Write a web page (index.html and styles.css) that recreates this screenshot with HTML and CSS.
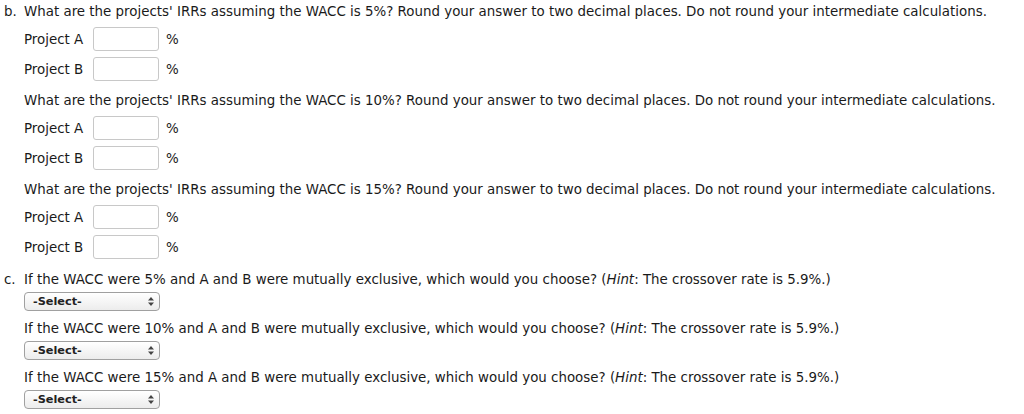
FILE: index.html
```html
<!DOCTYPE html>
<html>
<head>
<meta charset="utf-8">
<link rel="stylesheet" href="styles.css">
</head>
<body>
<div class="page">
  <div class="part">
    <div class="part-label">b.</div>
    <div class="part-body">
      <p class="q">What are the projects' IRRs assuming the WACC is 5%? Round your answer to two decimal places. Do not round your intermediate calculations.</p>
      <div class="row"><span class="lbl">Project A</span><span class="inp"></span><span class="pct">%</span></div>
      <div class="row"><span class="lbl">Project B</span><span class="inp"></span><span class="pct">%</span></div>
      <p class="q gap">What are the projects' IRRs assuming the WACC is 10%? Round your answer to two decimal places. Do not round your intermediate calculations.</p>
      <div class="row"><span class="lbl">Project A</span><span class="inp"></span><span class="pct">%</span></div>
      <div class="row"><span class="lbl">Project B</span><span class="inp"></span><span class="pct">%</span></div>
      <p class="q gap">What are the projects' IRRs assuming the WACC is 15%? Round your answer to two decimal places. Do not round your intermediate calculations.</p>
      <div class="row"><span class="lbl">Project A</span><span class="inp"></span><span class="pct">%</span></div>
      <div class="row"><span class="lbl">Project B</span><span class="inp"></span><span class="pct">%</span></div>
    </div>
  </div>
  <div class="part part-c">
    <div class="part-label">c.</div>
    <div class="part-body">
      <p class="q">If the WACC were 5% and A and B were mutually exclusive, which would you choose? (<i>Hint</i>: The crossover rate is 5.9%.)</p>
      <div class="sel"><span>-Select-</span><svg class="arr" width="6" height="9" viewBox="0 0 6 9"><path d="M0 3.5 L3 0 L6 3.5 Z M0 5.5 L3 9 L6 5.5 Z" fill="#444"/></svg></div>
      <p class="q gap2">If the WACC were 10% and A and B were mutually exclusive, which would you choose? (<i>Hint</i>: The crossover rate is 5.9%.)</p>
      <div class="sel"><span>-Select-</span><svg class="arr" width="6" height="9" viewBox="0 0 6 9"><path d="M0 3.5 L3 0 L6 3.5 Z M0 5.5 L3 9 L6 5.5 Z" fill="#444"/></svg></div>
      <p class="q gap2">If the WACC were 15% and A and B were mutually exclusive, which would you choose? (<i>Hint</i>: The crossover rate is 5.9%.)</p>
      <div class="sel"><span>-Select-</span><svg class="arr" width="6" height="9" viewBox="0 0 6 9"><path d="M0 3.5 L3 0 L6 3.5 Z M0 5.5 L3 9 L6 5.5 Z" fill="#444"/></svg></div>
    </div>
  </div>
</div>
</body>
</html>
```
FILE: styles.css
```css
html, body {
  margin: 0;
  padding: 0;
  background: #fff;
}
body {
  font-family: Verdana, "DejaVu Sans", sans-serif;
  font-size: 13.4px;
  color: #1a1a1a;
}
.page {
  padding: 4px 0 0 4px;
}
.part {
  display: flex;
}
.part-c {
  margin-top: 10px;
}
.part-label {
  width: 20px;
  line-height: 16px;
}
.part-body {
  flex: 1;
}
.q {
  margin: 0 0 4px 0;
  line-height: 16px;
  white-space: nowrap;
}
.q.gap {
  margin-top: 9px;
}
.q.gap2 {
  margin-top: 10px;
}
.row {
  display: flex;
  align-items: center;
  height: 30px;
}
.lbl {
  width: 69px;
}
.inp {
  width: 64px;
  height: 22px;
  border: 1px solid #c8c8c8;
  border-radius: 3px;
  background: #fff;
}
.pct {
  margin-left: 7px;
}
.sel {
  height: 17px;
  border: 1px solid #a0a0a0;
  border-radius: 4px;
  background: linear-gradient(#ffffff, #ececec);
  display: flex;
  align-items: center;
  justify-content: space-between;
  padding: 0 5px 0 8px;
  box-sizing: content-box;
  width: 121px;
  font-size: 11.3px;
  font-weight: bold;
  color: #222;
}
.arr {
  display: block;
}
```
